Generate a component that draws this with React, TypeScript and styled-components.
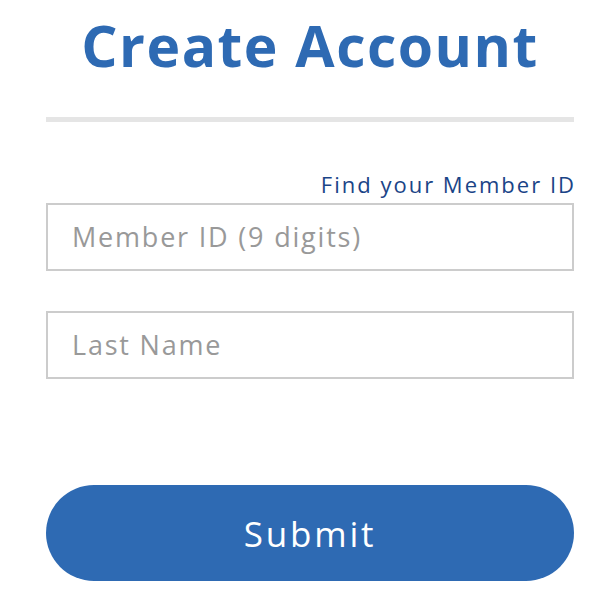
import React from "react";
import styled, { createGlobalStyle } from "styled-components";

const GlobalStyle = createGlobalStyle`
  body {
    margin: 0;
    background: #ffffff;
    font-family: "Open Sans", "Liberation Sans", sans-serif;
  }
`;

const Page = styled.div`
  width: 528px;
  padding: 0 40px 0 46px;
  display: flex;
  flex-direction: column;
`;

const Title = styled.h1`
  margin: 0;
  padding-top: 10px;
  text-align: center;
  font-size: 57px;
  line-height: 70px;
  font-weight: 700;
  color: #2e6ab3;
  letter-spacing: 1.5px;
`;

const Divider = styled.hr`
  margin: 37px 0 0;
  border: 0;
  height: 5px;
  background: #e5e5e5;
`;

const HelpLink = styled.a`
  align-self: flex-end;
  margin-top: 48px;
  font-size: 22px;
  line-height: 28px;
  letter-spacing: 2px;
  margin-right: -2px;
  color: #1a4487;
  text-decoration: none;
  cursor: pointer;
`;

const Field = styled.input<{ $gap?: number }>`
  box-sizing: border-box;
  width: 100%;
  height: 68px;
  margin-top: ${(p) => p.$gap ?? 0}px;
  padding: 0 24px 2px;
  border: 2px solid #cccccc;
  border-radius: 0;
  font-family: "Open Sans", "Liberation Sans", sans-serif;
  font-size: 27px;
  letter-spacing: 1.8px;
  color: #333;
  outline: none;
  &::placeholder {
    color: #999999;
  }
`;

const SubmitButton = styled.button`
  margin-top: 106px;
  width: 100%;
  height: 96px;
  border: 0;
  border-radius: 48px;
  background: #2e6ab3;
  color: #ffffff;
  font-family: "Open Sans", "Liberation Sans", sans-serif;
  font-size: 35px;
  letter-spacing: 2.8px;
  cursor: pointer;
`;

export default function App() {
  return (
    <>
      <GlobalStyle />
      <Page>
        <Title>Create Account</Title>
        <Divider />
        <HelpLink>Find your Member ID</HelpLink>
        <Field placeholder="Member ID (9 digits)" $gap={5} />
        <Field placeholder="Last Name" $gap={40} />
        <SubmitButton>Submit</SubmitButton>
      </Page>
    </>
  );
}
